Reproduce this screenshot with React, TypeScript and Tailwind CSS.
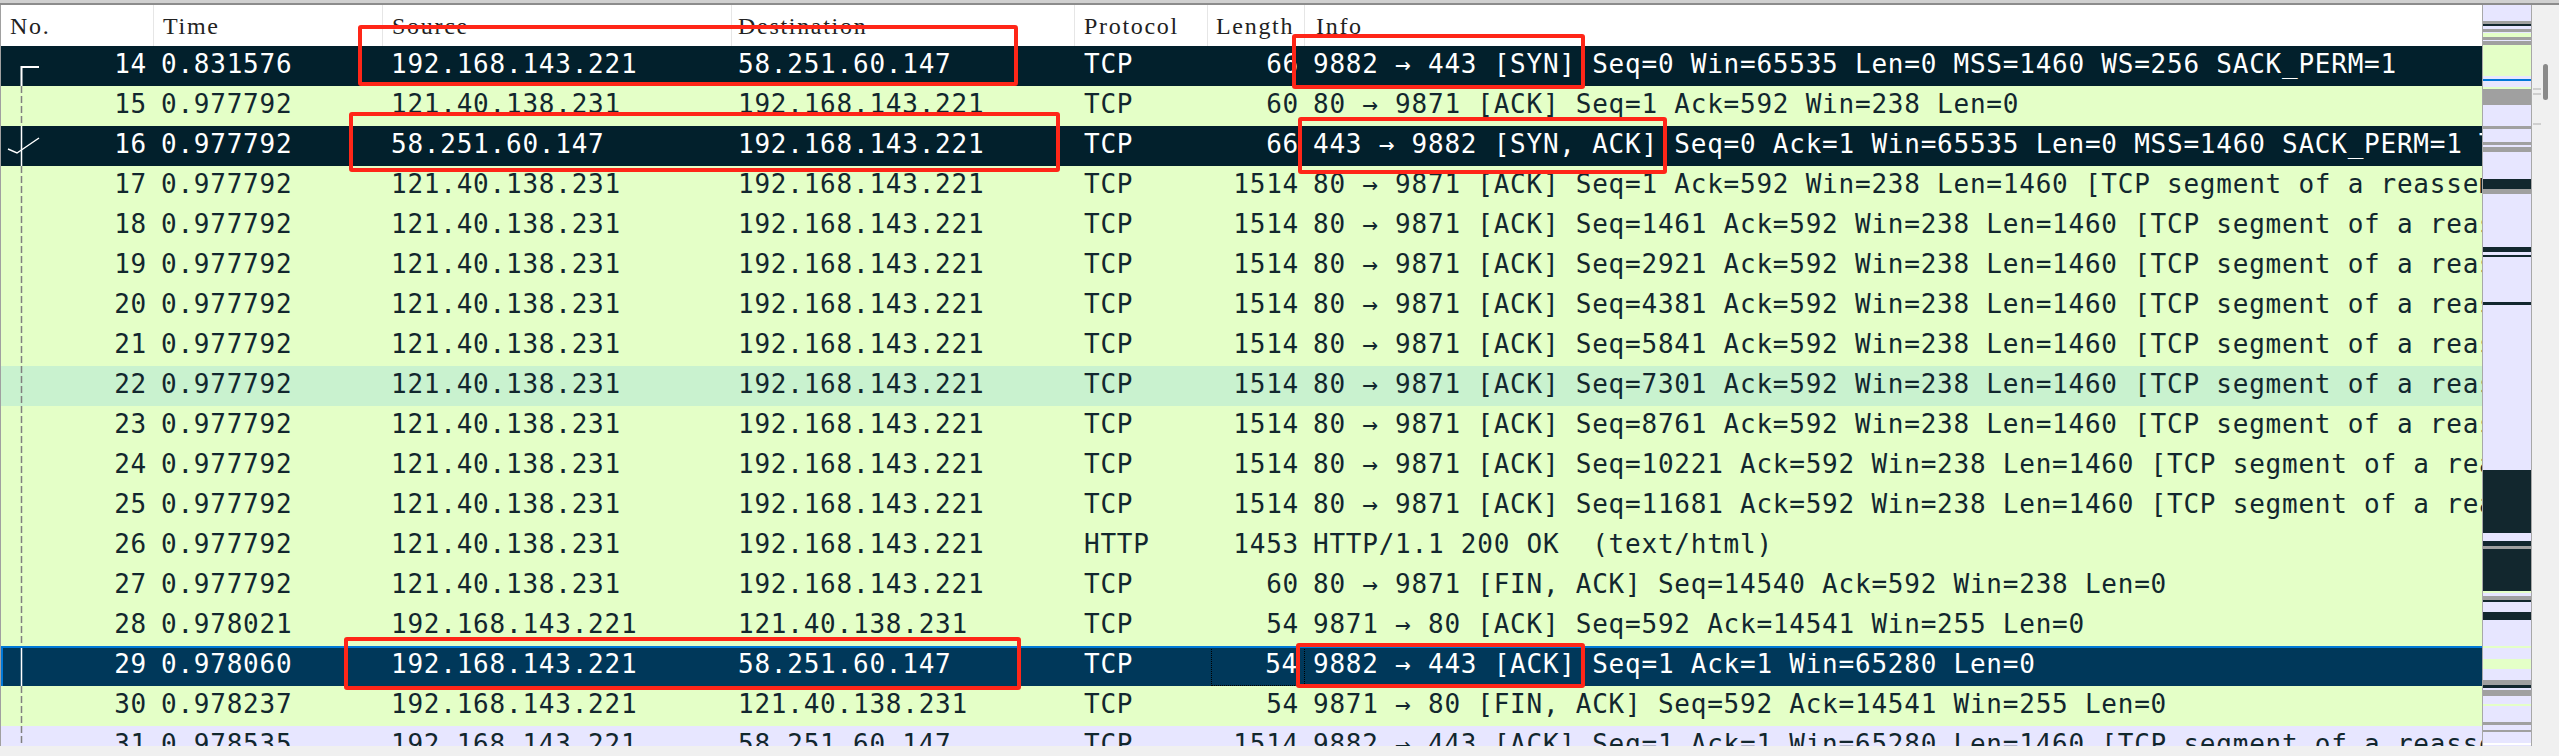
import React from 'react';

type Row = {
  no: number;
  time: string;
  src: string;
  dst: string;
  proto: string;
  len: number;
  info: string;
  kind?: 'dark' | 'selected' | 'mint' | 'lavender';
};

const A = '121.40.138.231';
const B = '192.168.143.221';
const C = '58.251.60.147';
const SEG = '[TCP segment of a reassembled PDU]';

const rows: Row[] = [
  { no: 14, time: '0.831576', src: B, dst: C, proto: 'TCP', len: 66, info: '9882 → 443 [SYN] Seq=0 Win=65535 Len=0 MSS=1460 WS=256 SACK_PERM=1', kind: 'dark' },
  { no: 15, time: '0.977792', src: A, dst: B, proto: 'TCP', len: 60, info: '80 → 9871 [ACK] Seq=1 Ack=592 Win=238 Len=0' },
  { no: 16, time: '0.977792', src: C, dst: B, proto: 'TCP', len: 66, info: '443 → 9882 [SYN, ACK] Seq=0 Ack=1 Win=65535 Len=0 MSS=1460 SACK_PERM=1 TSval', kind: 'dark' },
  { no: 17, time: '0.977792', src: A, dst: B, proto: 'TCP', len: 1514, info: `80 → 9871 [ACK] Seq=1 Ack=592 Win=238 Len=1460 ${SEG}` },
  { no: 18, time: '0.977792', src: A, dst: B, proto: 'TCP', len: 1514, info: `80 → 9871 [ACK] Seq=1461 Ack=592 Win=238 Len=1460 ${SEG}` },
  { no: 19, time: '0.977792', src: A, dst: B, proto: 'TCP', len: 1514, info: `80 → 9871 [ACK] Seq=2921 Ack=592 Win=238 Len=1460 ${SEG}` },
  { no: 20, time: '0.977792', src: A, dst: B, proto: 'TCP', len: 1514, info: `80 → 9871 [ACK] Seq=4381 Ack=592 Win=238 Len=1460 ${SEG}` },
  { no: 21, time: '0.977792', src: A, dst: B, proto: 'TCP', len: 1514, info: `80 → 9871 [ACK] Seq=5841 Ack=592 Win=238 Len=1460 ${SEG}` },
  { no: 22, time: '0.977792', src: A, dst: B, proto: 'TCP', len: 1514, info: `80 → 9871 [ACK] Seq=7301 Ack=592 Win=238 Len=1460 ${SEG}`, kind: 'mint' },
  { no: 23, time: '0.977792', src: A, dst: B, proto: 'TCP', len: 1514, info: `80 → 9871 [ACK] Seq=8761 Ack=592 Win=238 Len=1460 ${SEG}` },
  { no: 24, time: '0.977792', src: A, dst: B, proto: 'TCP', len: 1514, info: `80 → 9871 [ACK] Seq=10221 Ack=592 Win=238 Len=1460 ${SEG}` },
  { no: 25, time: '0.977792', src: A, dst: B, proto: 'TCP', len: 1514, info: `80 → 9871 [ACK] Seq=11681 Ack=592 Win=238 Len=1460 ${SEG}` },
  { no: 26, time: '0.977792', src: A, dst: B, proto: 'HTTP', len: 1453, info: 'HTTP/1.1 200 OK  (text/html)' },
  { no: 27, time: '0.977792', src: A, dst: B, proto: 'TCP', len: 60, info: '80 → 9871 [FIN, ACK] Seq=14540 Ack=592 Win=238 Len=0' },
  { no: 28, time: '0.978021', src: B, dst: A, proto: 'TCP', len: 54, info: '9871 → 80 [ACK] Seq=592 Ack=14541 Win=255 Len=0' },
  { no: 29, time: '0.978060', src: B, dst: C, proto: 'TCP', len: 54, info: '9882 → 443 [ACK] Seq=1 Ack=1 Win=65280 Len=0', kind: 'selected' },
  { no: 30, time: '0.978237', src: B, dst: A, proto: 'TCP', len: 54, info: '9871 → 80 [FIN, ACK] Seq=592 Ack=14541 Win=255 Len=0' },
  { no: 31, time: '0.978535', src: B, dst: C, proto: 'TCP', len: 1514, info: `9882 → 443 [ACK] Seq=1 Ack=1 Win=65280 Len=1460 ${SEG}`, kind: 'lavender' },
];

const GRAY = '#a0a0a0';
const DARK = '#12272e';
const GREEN = '#e4ffc7';

// y, height, colour of the packet map beside the list
const stripes: [number, number, string][] = [
  [21, 3, GRAY], [24, 2, DARK], [29, 3, GRAY], [33, 4, GREEN], [37, 3, GRAY], [41, 4, GRAY],
  [45, 31, GREEN], [79, 2, '#0078d7'], [87, 2, GREEN], [89, 16, GRAY], [126, 3, GRAY],
  [142, 3, GRAY], [147, 5, GRAY], [179, 10, DARK], [189, 5, GRAY], [247, 5, DARK], [255, 2, DARK],
  [302, 3, DARK], [470, 63, DARK], [541, 5, DARK], [546, 3, GRAY], [549, 42, DARK], [591, 2, GREEN],
  [596, 4, GRAY], [600, 2, DARK], [612, 8, DARK], [646, 2, GREEN], [659, 10, GREEN], [680, 5, GRAY],
  [685, 3, DARK], [690, 6, GRAY], [704, 2, GREEN], [722, 3, GRAY], [730, 2, GRAY], [743, 2, '#ffffff'],
];

function rowClass(kind?: Row['kind']) {
  if (kind === 'dark') return 'bg-[#02202c] text-white pb-[3px]';
  if (kind === 'selected') return 'bg-[#00385a] text-white border-t-2 border-l-2 border-[#0078d7] pb-[5px]';
  if (kind === 'mint') return 'bg-[#c9f2cf] text-[#12272e] pb-[3px]';
  if (kind === 'lavender') return 'bg-[#e7e6ff] text-[#12272e] pb-[3px]';
  return 'bg-[#e4ffc7] text-[#12272e] pb-[3px]';
}

function Tree({ no }: { no: number }) {
  const white = no === 14 || no === 16 || no === 29;
  return (
    <svg
      className={`absolute ${no === 29 ? '-left-[2px] -top-[2px]' : 'left-0 top-0'}`}
      width="40"
      height="40"
      viewBox="0 0 40 40"
      fill="none"
    >
      {no === 14 ? (
        <path d="M38 21H20.5V40" stroke="#fff" strokeWidth="2" />
      ) : (
        <path
          d="M20.5 0V40"
          stroke={white ? '#fff' : '#808080'}
          strokeWidth="1.5"
          strokeDasharray={white ? undefined : '7 3'}
        />
      )}
      {no === 16 && <path d="M7 23L16 27L38 12" stroke="#fff" strokeWidth="1.5" />}
    </svg>
  );
}

function PacketRow({ row }: { row: Row }) {
  const selected = row.kind === 'selected';
  return (
    <div className={`relative flex h-10 shrink-0 items-center overflow-hidden whitespace-pre ${rowClass(row.kind)}`}>
      <Tree no={row.no} />
      <div className={`shrink-0 pr-[7px] text-right ${selected ? 'w-[151px]' : 'w-[153px]'}`}>{row.no}</div>
      <div className="w-[229px] shrink-0 pl-[7px]">{row.time}</div>
      <div className="w-[349px] shrink-0 pl-[8px]">{row.src}</div>
      <div className="w-[343px] shrink-0 pl-[6px]">{row.dst}</div>
      <div className="w-[133px] shrink-0 pl-[9px]">{row.proto}</div>
      {selected ? (
        <div className="-mt-[2px] ml-[3px] flex h-10 w-[94px] shrink-0 items-center justify-end self-start border border-dotted border-black pr-[6px] pb-[3px]">
          {row.len}
        </div>
      ) : (
        <div className="w-[97px] shrink-0 pr-[6px] text-right">{row.len}</div>
      )}
      <div className="shrink-0 pl-[8px]">{row.info}</div>
    </div>
  );
}

function HeaderCell({ label, className }: { label: string; className: string }) {
  return (
    <div className={`flex h-full shrink-0 items-center border-r border-[#e6e6e6] ${className}`}>
      {label}
    </div>
  );
}

function RedBox({ className }: { className: string }) {
  return <div className={`absolute rounded-[3px] border-[4px] border-[#ff2618] ${className}`} />;
}

export default function App() {
  return (
    <div className="relative h-[756px] w-[2559px] overflow-hidden bg-[#f0f0f0] font-['DejaVu_Sans_Mono',monospace] text-[26px] tracking-[0.77px]">
      <div className="h-[5px] border-b-2 border-[#8c8c8c] bg-[#d0d0d0]" />
      <div className="flex h-[741px]">
        {/* Packet list */}
        <div className="flex h-full w-[2482px] flex-col overflow-hidden border-l border-[#a0a0a0]">
          <div className="flex h-[41px] shrink-0 items-center bg-white font-['Liberation_Serif',serif] text-[24px] tracking-[1.7px] text-[#222]">
            <HeaderCell label="No." className="w-[153px] pl-[9px]" />
            <HeaderCell label="Time" className="w-[229px] pl-[9px]" />
            <HeaderCell label="Source" className="w-[349px] pl-[9px]" />
            <HeaderCell label="Destination" className="w-[343px] pl-[6px]" />
            <HeaderCell label="Protocol" className="w-[133px] pl-[9px]" />
            <HeaderCell label="Length" className="w-[97px] pl-[8px]" />
            <div className="pl-[11px]">Info</div>
          </div>
          {rows.map(row => (
            <PacketRow key={row.no} row={row} />
          ))}
        </div>

        {/* Packet map */}
        <div className="h-full w-[50px] shrink-0 border-x border-[#a8a8a8] bg-[#e7e6ff]">
          <svg width="48" height="741" viewBox="0 5 48 741">
            {stripes.map(([y, h, color]) => (
              <rect key={y} x="0" y={y} width="48" height={h} fill={color} />
            ))}
          </svg>
        </div>

        {/* Scroll bar */}
        <div className="relative flex-1">
          <div className="absolute left-[1px] top-[83px] h-[2px] w-[8px] bg-[#cfcfcf]" />
          <div className="absolute left-[1px] top-[88px] h-[2px] w-[8px] bg-[#cfcfcf]" />
          <div className="absolute left-[1px] top-[118px] h-[2px] w-[8px] bg-[#cfcfcf]" />
          <div className="absolute left-[11px] top-[59px] h-[36px] w-[5px] rounded-full bg-[#8a8a8a]" />
        </div>
      </div>

      {/* Hand-drawn highlights over the capture */}
      <RedBox className="left-[358px] top-[25px] h-[61px] w-[660px]" />
      <RedBox className="left-[349px] top-[112px] h-[60px] w-[711px]" />
      <RedBox className="left-[344px] top-[637px] h-[53px] w-[677px]" />
      <RedBox className="left-[1292px] top-[34px] h-[55px] w-[293px]" />
      <RedBox className="left-[1298px] top-[117px] h-[57px] w-[369px]" />
      <RedBox className="left-[1296px] top-[643px] h-[45px] w-[289px]" />
    </div>
  );
}
